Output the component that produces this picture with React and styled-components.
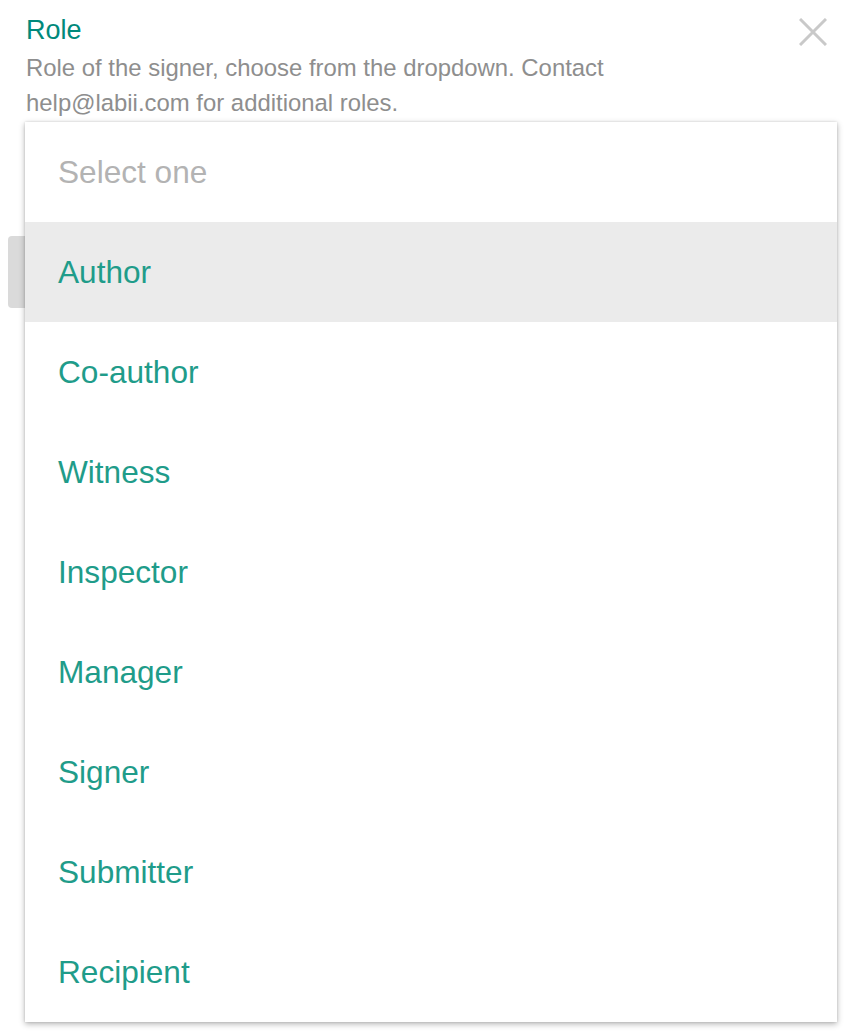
import styled, { createGlobalStyle } from "styled-components";

const GlobalStyle = createGlobalStyle`
  body {
    margin: 0;
    background: #ffffff;
    font-family: "Liberation Sans", Arial, Helvetica, sans-serif;
  }
`;

const roles = [
  "Author",
  "Co-author",
  "Witness",
  "Inspector",
  "Manager",
  "Signer",
  "Submitter",
  "Recipient",
];

const App = () => {
  return (
    <>
      <GlobalStyle />
      <Page>
        <Header>
          <HeaderText>
            <Label>Role</Label>
            <Description>
              Role of the signer, choose from the dropdown. Contact
              help@labii.com for additional roles.
            </Description>
          </HeaderText>
          <CloseButton aria-label="Close">
            <svg width="28" height="28" viewBox="0 0 28 28">
              <path
                d="M1 1 L27 27 M27 1 L1 27"
                stroke="#c9c9c9"
                strokeWidth="3"
                fill="none"
              />
            </svg>
          </CloseButton>
        </Header>
        <Field>
          <SelectBox />
          <Menu>
            <MenuItem $placeholder>Select one</MenuItem>
            {roles.map((r, i) => (
              <MenuItem key={r} $active={i === 0}>
                {r}
              </MenuItem>
            ))}
          </Menu>
        </Field>
      </Page>
    </>
  );
};

export default App;

const Page = styled.div`
  padding: 14px 25px 0 26px;
  height: 1036px;
  box-sizing: border-box;
  overflow: hidden;
`;

const Header = styled.div`
  display: flex;
  justify-content: space-between;
  align-items: flex-start;
`;

const HeaderText = styled.div`
  max-width: 680px;
`;

const Label = styled.div`
  color: #00897b;
  font-size: 27px;
  line-height: 32px;
`;

const Description = styled.div`
  margin-top: 4px;
  color: #8e8e8e;
  font-size: 23.9px;
  line-height: 35px;
`;

const CloseButton = styled.div`
  margin-top: 4px;
  width: 28px;
  height: 28px;
  cursor: pointer;

  svg {
    display: block;
  }
`;

const Field = styled.div`
  position: relative;
  margin-left: -18px;
  padding-top: 116px;
`;

const SelectBox = styled.div`
  width: 300px;
  height: 72px;
  background: #dadada;
  border-radius: 4px;
`;

const Menu = styled.div`
  position: absolute;
  top: 2px;
  left: 17px;
  width: 812px;
  background: #ffffff;
  box-shadow: 0 2px 6px rgba(0, 0, 0, 0.3), 0 0 2px rgba(0, 0, 0, 0.12);
`;

const MenuItem = styled.div`
  height: 100px;
  display: flex;
  align-items: center;
  padding-left: 33px;
  font-size: 31.6px;
  color: ${(p) => (p.$placeholder ? "#b3b3b3" : "#1f9c8a")};
  background: ${(p) => (p.$active ? "#ebebeb" : "transparent")};
  cursor: pointer;
`;
